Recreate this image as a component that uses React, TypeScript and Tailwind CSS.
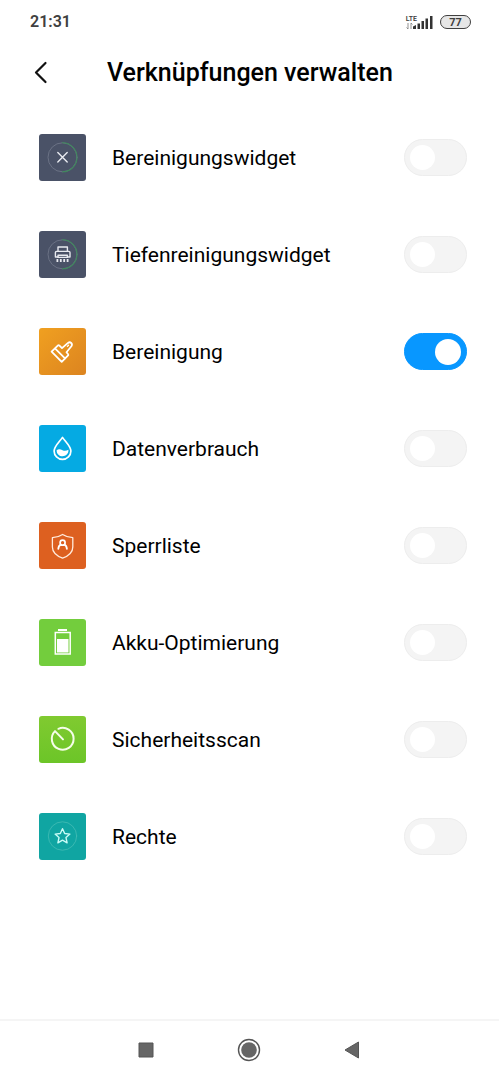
import { useState } from "react";

interface Shortcut {
  id: string;
  label: string;
  tile: string;
  icon: React.ReactNode;
}

const Glyph = ({ children }: { children: React.ReactNode }) => (
  <svg viewBox="0 0 47 47" className="h-full w-full" fill="none" stroke="white" strokeLinecap="round" strokeLinejoin="round" aria-hidden="true">
    {children}
  </svg>
);

const Ring = () => (
  <>
    <circle cx="23.5" cy="23.3" r="14.5" stroke="#6b7285" strokeWidth="1" />
    <path d="M23.5 8.8a14.5 14.5 0 0 1 0 29" stroke="#3f8a5c" strokeWidth="1.1" />
  </>
);

const shortcuts: Shortcut[] = [
  {
    id: "cleaner-widget",
    label: "Bereinigungswidget",
    tile: "bg-[#4a5267]",
    icon: (
      <Glyph>
        <Ring />
        <path d="M18.8 18.6l9.4 9.4M28.2 18.6l-9.4 9.4" stroke="#e8eaf0" strokeWidth="1.4" />
      </Glyph>
    ),
  },
  {
    id: "deep-clean-widget",
    label: "Tiefenreinigungswidget",
    tile: "bg-[#4a5267]",
    icon: (
      <Glyph>
        <Ring />
        <g stroke="#e8eaf0" strokeWidth="1.4">
          <path d="M19 20.4v-4.4h9.4v4.4" />
          <path d="M19 26h-2.6v-4.4q0-1.2 1.2-1.2h12.2q1.2 0 1.2 1.2V26h-2.6" />
          <path d="M19 24.2h9.4v2.2H19z" />
          <path d="M18.4 28v3M21.8 28v3M25.200 28v3M28.600 28v3" strokeWidth="1.8" strokeLinecap="butt" />
        </g>
      </Glyph>
    ),
  },
  {
    id: "cleaner",
    label: "Bereinigung",
    tile: "bg-linear-to-br from-[#f0a020] to-[#dc8420]",
    icon: (
      <Glyph>
        <g strokeWidth="1.8">
          <path d="M12.6 23.6l6.4-6.2q.6-.6 1.2 0l2.8 2.7 6-5.2c2.4-1.7 5 .9 3.4 3.3l-4.9 6 1.6 2q.5.6 0 1.2l-6.4 6.5z" />
          <path d="M16.2 20.6l9.8 9.8" />
          <path d="M28.4 18.4l1.1-1.1" strokeWidth="1.3" />
        </g>
      </Glyph>
    ),
  },
  {
    id: "data-usage",
    label: "Datenverbrauch",
    tile: "bg-[#05aae3]",
    icon: (
      <Glyph>
        <path d="M23.5 12.4c-2.4 3.7-8.4 9-8.4 13.6a8.4 8.4 0 0 0 16.8 0c0-4.6-6-9.9-8.4-13.6z" strokeWidth="1.7" />
        <path d="M17.6 25.2c2.2-1.5 4-.8 5.900 0s3.800.7 5.900-.4c.8 8-11.600 9-11.800.4z" fill="white" stroke="none" />
      </Glyph>
    ),
  },
  {
    id: "blocklist",
    label: "Sperrliste",
    tile: "bg-[#dd6020]",
    icon: (
      <Glyph>
        <path d="M23.6 12.5c3 2 6.5 3 10.2 3.200v9.300c0 5.500-4.500 9-10.200 11.200C17.900 34 13.400 30.500 13.400 25v-9.300c3.700-.2 7.200-1.200 10.200-3.200z" stroke="#ffeadb" strokeWidth="1.3" />
        <circle cx="23.6" cy="20.7" r="2.5" strokeWidth="1.7" />
        <path d="M21.8 22.6c-1.700.7-2.300 1.700-2.500 4.300M25.400 22.600c1.700.7 2.300 1.700 2.500 4.300" strokeWidth="1.8" />
      </Glyph>
    ),
  },
  {
    id: "battery",
    label: "Akku-Optimierung",
    tile: "bg-[#73cd3d]",
    icon: (
      <Glyph>
        <path d="M19 10h9v2h-9z" fill="white" stroke="none" />
        <path d="M16.3 13.5h14.9V35H16.3z" strokeWidth="1.5" strokeLinejoin="miter" />
        <path d="M18 20h11.5v13.5H18z" fill="white" stroke="none" />
      </Glyph>
    ),
  },
  {
    id: "security-scan",
    label: "Sicherheitsscan",
    tile: "bg-linear-to-b from-[#80ca30] to-[#6cc528]",
    icon: (
      <Glyph>
        <path d="M19.4 12.8a10.900 10.900 0 1 1-3.400 2.300L24 23.4" stroke="#f5fde9" strokeWidth="2" />
      </Glyph>
    ),
  },
  {
    id: "permissions",
    label: "Rechte",
    tile: "bg-[#10a5a2]",
    icon: (
      <Glyph>
        <circle cx="23.5" cy="23" r="14.2" stroke="#45bcb5" strokeWidth=".8" />
        <path d="M23.5 15.7l2.2 4.8 5.2.6-3.900 3.500 1.100 5.200-4.600-2.600-4.600 2.600 1.100-5.200-3.900-3.500 5.200-.6z" stroke="#c9fbf6" strokeWidth="1.4" />
      </Glyph>
    ),
  },
];

const StatusBar = () => (
  <div className="flex h-11 items-center justify-between pr-7 pl-[30px] text-[#404040]">
    <span className="text-[16px] font-semibold">21:31</span>
    <div className="flex items-center gap-[7px]">
      <div className="flex items-end">
        <div className="flex flex-col">
          <span className="text-[7px] leading-[8px] font-semibold">LTE</span>
          <svg viewBox="0 0 8 6" className="h-[6px] w-2" fill="none" stroke="#777" strokeWidth=".8" aria-hidden="true">
            <path d="M2 0v6M.5 4.5L2 6M5 6V0M6.5 1.5L5 0" />
          </svg>
        </div>
        <svg viewBox="0 0 20 14" className="-ml-1 h-[14px] w-5" fill="#333" aria-hidden="true">
          <path d="M0 11.5L3 10v4H0zM4.5 8.5H7V14H4.5zM8.5 6H11v8H8.500zM12.5 3.5H15V14h-2.500zM17 1h2.500v13H17z" />
        </svg>
      </div>
      <span className="flex h-[14px] w-[31px] items-center justify-center rounded-full border border-[#404040] bg-[#e6e6e6] text-[11px] leading-none font-bold">
        77
      </span>
    </div>
  </div>
);

export default function App() {
  const [active, setActive] = useState<Record<string, boolean>>({ cleaner: true });

  const toggle = (id: string) => setActive((prev) => ({ ...prev, [id]: !prev[id] }));

  return (
    <div className="flex min-h-screen flex-col bg-white font-[Roboto,sans-serif] text-black">
      <StatusBar />

      <header className="flex h-[57px] items-center">
        <button type="button" aria-label="Zurück" className="flex w-[107px] shrink-0 pl-[33px]">
          <svg viewBox="0 0 16 24" className="h-6 w-4" fill="none" stroke="#111" strokeWidth="2.2" strokeLinecap="round" strokeLinejoin="round">
            <path d="M12.5 2L3 11.5l9.5 9.5" />
          </svg>
        </button>
        <h1 className="text-[25px] font-medium">Verknüpfungen verwalten</h1>
      </header>

      <main className="flex-1 pt-2">
        <ul>
          {shortcuts.map((item) => (
            <li key={item.id}>
              <label htmlFor={item.id} className="flex h-[97px] items-center pr-8 pl-[39px]">
                <span className={`h-[47px] w-[47px] shrink-0 overflow-hidden rounded-[3px] ${item.tile}`}>{item.icon}</span>
                <span className="flex-1 pt-px pl-[26px] text-[21px] leading-7">{item.label}</span>
                <input
                  id={item.id}
                  type="checkbox"
                  role="switch"
                  checked={!!active[item.id]}
                  onChange={() => toggle(item.id)}
                  className="flex h-[37px] w-[63px] shrink-0 appearance-none items-center rounded-full border border-[#ededed] bg-[#f4f4f4] px-[5px] before:h-[25px] before:w-[25px] before:rounded-full before:bg-white checked:justify-end checked:border-[#0897ff] checked:bg-[#0897ff] checked:before:h-[26px] checked:before:w-[26px]"
                />
              </label>
            </li>
          ))}
        </ul>
      </main>

      <nav className="flex h-[61px] items-center justify-center gap-[79px] border-t-2 border-[#f5f5f5] pr-0.5 pb-0.5">
        <button type="button" aria-label="Letzte Apps">
          <svg viewBox="0 0 24 24" className="h-6 w-6" fill="#666" stroke="#555">
            <path d="M5 5h14v14H5z" />
          </svg>
        </button>
        <button type="button" aria-label="Startbildschirm">
          <svg viewBox="0 0 24 24" className="h-6 w-6">
            <circle cx="12" cy="12" r="10.5" fill="none" stroke="#555" strokeWidth="1.4" />
            <circle cx="12" cy="12" r="7.8" fill="#666" />
          </svg>
        </button>
        <button type="button" aria-label="Zurück">
          <svg viewBox="0 0 24 24" className="h-6 w-6" fill="#666" stroke="#555" strokeLinejoin="round">
            <path d="M18.5 4v16L5 12z" />
          </svg>
        </button>
      </nav>
    </div>
  );
}
